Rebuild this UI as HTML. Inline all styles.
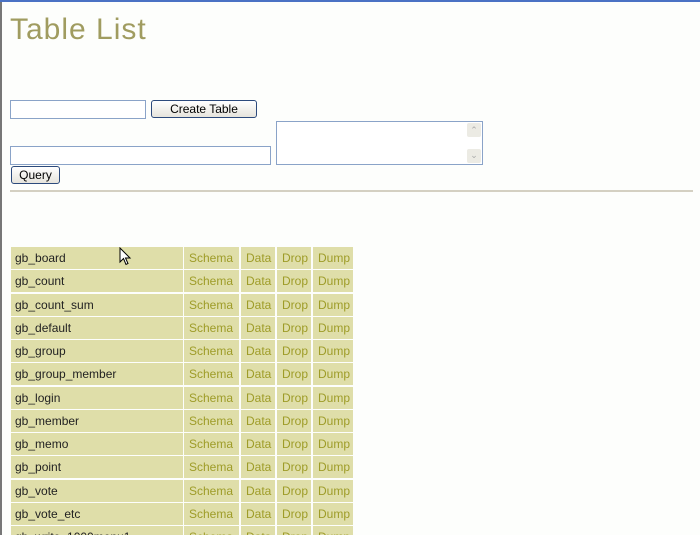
<!DOCTYPE html>
<html><head><meta charset="utf-8"><style>
html,body{margin:0;padding:0;overflow:hidden;width:700px;height:535px}
body{background:#fdfefc;position:relative;font-family:"Liberation Sans","DejaVu Sans",sans-serif}
.tb{position:absolute;left:0;top:0;width:700px;height:2px;background:#4a72c4}
.lb{position:absolute;left:0;top:2px;width:2px;height:533px;background:#777}
h1{position:absolute;left:10px;top:13px;margin:0;font-weight:normal;font-size:30px;line-height:34px;color:#a09c60;letter-spacing:1px}
.in{position:absolute;border:1px solid #8aa3c8;background:#fff;box-sizing:border-box}
.bt{position:absolute;border:1px solid #2c4a7c;border-radius:3px;background:linear-gradient(#fff,#e6e4dc);box-sizing:border-box;font-size:12px;text-align:center;color:#000;line-height:16px}
.hr{position:absolute;left:10px;top:190px;width:683px;height:2px;background:#d4d0c2}
.c{position:absolute;height:22px;background:#dfdea9;font-size:12px;line-height:22px;color:#9e9c28;box-sizing:border-box;overflow:hidden}
.n{color:#222;padding-left:4px}
.l{padding-left:5px}
</style></head><body>
<div class="tb"></div><div class="lb"></div>
<h1>Table List</h1>
<div class="in" style="left:10px;top:100px;width:136px;height:19px"></div>
<div class="bt" style="left:151px;top:100px;width:106px;height:18px">Create Table</div>
<div class="in" style="left:10px;top:146px;width:261px;height:19px"></div>
<div class="in" style="left:276px;top:121px;width:207px;height:44px">
 <div style="position:absolute;right:1px;top:1px;width:14px;height:14px;background:#ecebe4;border-radius:2px;font-size:9px;color:#aaa;text-align:center;line-height:14px">&#8963;</div>
 <div style="position:absolute;right:1px;bottom:1px;width:14px;height:14px;background:#ecebe4;border-radius:2px;font-size:9px;color:#aaa;text-align:center;line-height:12px">&#8964;</div>
</div>
<div class="bt" style="left:11px;top:166px;width:49px;height:18px">Query</div>
<div class="hr"></div>
<div id="t"></div>
<script>
var names=["gb_board","gb_count","gb_count_sum","gb_default","gb_group","gb_group_member","gb_login","gb_member","gb_memo","gb_point","gb_vote","gb_vote_etc","gb_write_1000menu1"];
var cols=[[184,55,"Schema"],[241,34,"Data"],[277,34,"Drop"],[313,40,"Dump"]];
var h="";
for(var i=0;i<names.length;i++){var y=Math.round(247+i*23.25);var hh=(y+22>535)?(535-y):22;
h+='<div class="c n" style="left:11px;width:172px;top:'+y+'px;height:'+hh+'px">'+names[i]+'</div>';
for(var j=0;j<4;j++)h+='<div class="c l" style="left:'+cols[j][0]+'px;width:'+cols[j][1]+'px;top:'+y+'px;height:'+hh+'px">'+cols[j][2]+'</div>';}
document.getElementById("t").innerHTML=h;
</script>
<svg style="position:absolute;left:119px;top:247px" width="14" height="20" viewBox="0 0 14 20"><path d="M1 1 L1 15 L4.5 11.5 L7 17.5 L9 16.5 L6.5 11 L11 11 Z" fill="#fff" stroke="#000" stroke-width="1"/></svg>
</body></html>
